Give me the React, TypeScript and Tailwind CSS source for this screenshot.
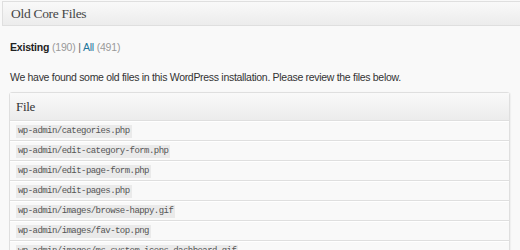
export default function App() {
  const files = [
    'wp-admin/categories.php',
    'wp-admin/edit-category-form.php',
    'wp-admin/edit-page-form.php',
    'wp-admin/edit-pages.php',
    'wp-admin/images/browse-happy.gif',
    'wp-admin/images/fav-top.png',
    'wp-admin/images/ms-system-icons-dashboard.gif',
  ];

  return (
    <div className="w-[520px] h-[250px] overflow-hidden bg-[#f9f9f9] font-['Liberation_Sans',Arial,sans-serif]">
      <div className="ml-[2px] mt-[1px] h-[25px] border-t border-b border-l border-[#dfdfdf] bg-gradient-to-b from-[#f9f9f9] to-[#ececec] pl-[8px] flex items-center">
        <h3 className="font-['Liberation_Serif',Georgia,serif] text-[13.5px] tracking-[-0.3px] text-[#464646] leading-none">Old Core Files</h3>
      </div>

      <div className="pl-[10px] pt-[14px] text-[10.5px] tracking-[-0.2px] leading-[14px]">
        <span className="font-bold text-[#222]">Existing</span>
        <span className="text-[#999]"> (190)</span>
        <span className="text-[#666]"> | </span>
        <a className="text-[#21759b]">All</a>
        <span className="text-[#999]"> (491)</span>
      </div>

      <p className="pl-[10px] pt-[16px] text-[10.5px] tracking-[-0.3px] leading-[14px] text-[#333]">
        We have found some old files in this WordPress installation. Please review the files below.
      </p>

      <div className="ml-[9px] mt-[8px] w-[501px] border border-[#dfdfdf] rounded-t-[3px] bg-[#f9f9f9] shadow-[1px_0_1px_rgba(0,0,0,0.04)]">
        <div className="h-[28px] border-b border-[#dfdfdf] bg-gradient-to-b from-[#f9f9f9] to-[#ececec] pl-[6px] flex items-center">
          <span className="font-['Liberation_Serif',Georgia,serif] text-[13px] tracking-[-0.3px] text-[#333]">File</span>
        </div>
        {files.map((f) => (
          <div key={f} className="h-[20px] border-b border-[#dfdfdf] border-t border-t-white pl-[6px] flex items-center">
            <code className="bg-[#eaeaea] px-[2px] font-['Liberation_Mono',monospace] text-[9px] tracking-[-0.55px] leading-[13px] text-[#555]">{f}</code>
          </div>
        ))}
      </div>
    </div>
  );
}
